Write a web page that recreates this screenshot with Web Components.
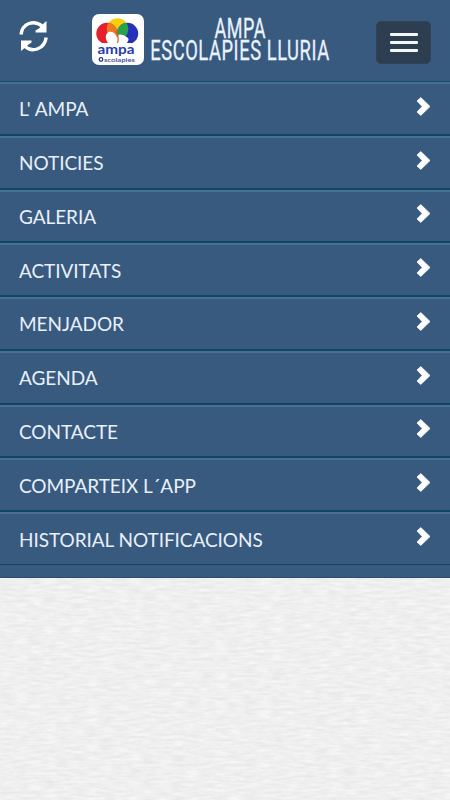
<!DOCTYPE html>
<html lang="ca">
<head>
<meta charset="utf-8">
<meta name="viewport" content="width=device-width, initial-scale=1">
<title>AMPA Escolapies Lluria</title>
<style>
    html, body {
        margin: 0;
        height: 100%;
        overflow: hidden;
    }
    body {
        font-family: Lato, "Open Sans", sans-serif;
        background: #efefef;
    }
</style>
</head>
<body>
<ampa-app>
    <ampa-header slot="header"></ampa-header>
    <ampa-menu slot="menu">
        <ampa-menu-item>L' AMPA</ampa-menu-item>
        <ampa-menu-item>NOTICIES</ampa-menu-item>
        <ampa-menu-item>GALERIA</ampa-menu-item>
        <ampa-menu-item>ACTIVITATS</ampa-menu-item>
        <ampa-menu-item>MENJADOR</ampa-menu-item>
        <ampa-menu-item>AGENDA</ampa-menu-item>
        <ampa-menu-item>CONTACTE</ampa-menu-item>
        <ampa-menu-item>COMPARTEIX L´APP</ampa-menu-item>
        <ampa-menu-item>HISTORIAL NOTIFICACIONS</ampa-menu-item>
    </ampa-menu>
    <ampa-paper></ampa-paper>
</ampa-app>

<script>
window.customElements.define('ampa-app', class extends HTMLElement {
    constructor() {
        super()
        let shadow = this.attachShadow({ mode: 'open' });
        shadow.innerHTML = `
        <style>
            :host {
                display: flex;
                flex-direction: column;
                height: 100vh;
            }
            nav {
                box-sizing: border-box;
                height: 578px;
                flex: none;
                background: #385a7f;
                border-bottom: 1px solid #2b4c73;
            }
        </style>
        <nav>
            <slot name="header"></slot>
            <slot name="menu"></slot>
        </nav>
        <slot></slot>
        `
    }
})

window.customElements.define('ampa-header', class extends HTMLElement {
    constructor() {
        super()
        let shadow = this.attachShadow({ mode: 'open' });
        shadow.innerHTML = `
        <style>
            :host {
                display: flex;
                box-sizing: border-box;
                height: 82px;
                padding: 8px 19px 0;
                align-items: flex-start;
                border-bottom: 1px solid #17496a;
            }
            svg {
                display: block;
                overflow: visible;
            }
            .refresh {
                margin: 12px 44px 0 0;
            }
            ampa-logo {
                margin-top: 6px;
            }
            .title {
                margin-left: 3px;
            }
            ampa-toggle {
                margin: 13px 0 0 auto;
            }
        </style>
        <svg class="refresh" width="29" height="33" viewBox="0 0 29 33" fill="none">
            <path d="M2 14.500C3.500 3 15 -0.500 23 6" stroke="#fff" stroke-width="3.400"/>
            <path d="M27.500 1V12.500H16.500V10.500L20 8.500L24 4Z" fill="#fff"/>
            <path d="M27.200 17.500C25.500 29 13.500 33 6 26.500" stroke="#fff" stroke-width="3.400"/>
            <path d="M2 31V20.500H12.500V22.500L9.500 24.500L5 28.500Z" fill="#fff"/>
        </svg>
        <ampa-logo></ampa-logo>
        <svg class="title" width="188" height="64" viewBox="147 8 188 64" fill="#e9f3fd" stroke="#e9f3fd" stroke-width="0.300" font-family="Roboto, sans-serif" font-size="27" letter-spacing="0.800">
            <text><tspan x="214.500" y="37.700" textLength="51.500" lengthAdjust="spacingAndGlyphs">AMPA</tspan><tspan x="150.200" y="60" textLength="179.500" lengthAdjust="spacingAndGlyphs">ESCOLAPIES LLURIA</tspan></text>
        </svg>
        <ampa-toggle></ampa-toggle>
        `
    }
})

window.customElements.define('ampa-logo', class extends HTMLElement {
    constructor() {
        super()
        let shadow = this.attachShadow({ mode: 'open' });
        shadow.innerHTML = `
        <style>
            :host {
                display: block;
                width: 52px;
                height: 51px;
            }
            svg {
                display: block;
            }
        </style>
        <svg width="52" height="51" viewBox="0 0 52 51">
            <defs>
                <clipPath id="petals"><rect width="52" height="29"/></clipPath>
                <clipPath id="top"><circle cx="25.500" cy="15" r="10.800"/></clipPath>
            </defs>
            <rect width="52" height="51" rx="7" fill="#fff"/>
            <g clip-path="url(#petals)">
                <circle cx="25.500" cy="15" r="10.800" fill="#f8cf0c"/>
                <circle cx="15" cy="19.500" r="10.700" fill="#e3202c"/>
                <circle cx="35.500" cy="19.500" r="10.700" fill="#2431b8"/>
                <g clip-path="url(#top)">
                    <circle cx="15" cy="19.500" r="10.700" fill="#ef7822"/>
                    <circle cx="35.500" cy="19.500" r="10.700" fill="#28a34b"/>
                </g>
                <path d="M25.500 29H16C13 25 13 20 16.500 18C21 16.500 24 20 25.500 25Z" fill="#fff"/>
                <path d="M25.500 29C24.500 24 25.500 21 28 20.500C33 21 37 24 36.500 26L35 29Z" fill="#fff"/>
                <path d="M25.500 29C27 24 26 20 23.500 17" fill="none" stroke="#e15a28" stroke-width="1.200"/>
            </g>
            <text x="5.500" y="40" textLength="37" lengthAdjust="spacingAndGlyphs" font-family="Lato, sans-serif" font-weight="700" font-size="14" fill="#293cae">ampa</text>
            <circle cx="9" cy="45.500" r="1.800" fill="none" stroke="#293c8e" stroke-width="1.300"/>
            <text x="12" y="47.500" textLength="31" lengthAdjust="spacingAndGlyphs" font-family="Lato, sans-serif" font-weight="700" font-size="5.500" fill="#4a5799">scolapies</text>
        </svg>
        `
    }
})

window.customElements.define('ampa-toggle', class extends HTMLElement {
    constructor() {
        super()
        let shadow = this.attachShadow({ mode: 'open' });
        shadow.innerHTML = `
        <style>
            :host {
                display: flex;
                box-sizing: border-box;
                width: 55px;
                height: 43px;
                flex-direction: column;
                justify-content: center;
                align-items: center;
                gap: 5px;
                border: 1px solid #304357;
                border-radius: 5px;
                background: #2c3e50;
            }
            span {
                width: 28px;
                height: 3px;
                border-radius: 1px;
                background: #f2f7f8;
            }
        </style>
        <span></span>
        <span></span>
        <span></span>
        `
    }
})

window.customElements.define('ampa-menu', class extends HTMLElement {
    constructor() {
        super()
        let shadow = this.attachShadow({ mode: 'open' });
        shadow.innerHTML = `
        <style>
            :host {
                display: flex;
                flex-direction: column;
            }
        </style>
        <slot></slot>
        `
    }
})

window.customElements.define('ampa-menu-item', class extends HTMLElement {
    constructor() {
        super()
        let shadow = this.attachShadow({ mode: 'open' });
        shadow.innerHTML = `
        <style>
            :host {
                display: flex;
                box-sizing: border-box;
                height: 53.75px;
                padding: 0 19px;
                justify-content: space-between;
                align-items: center;
                border-top: 2px solid #4b6f93;
                border-bottom: 2px solid #0d4666;
                color: #e8f0fa;
                font-size: 19px;
                letter-spacing: -0.06px;
                line-height: 24px;
                white-space: nowrap;
            }
            :host(:last-child) {
                height: 53px;
                border-bottom-width: 1px;
            }
            span {
                padding-top: 1.2px;
            }
            svg {
                display: block;
                margin-bottom: 5px;
            }
        </style>
        <span><slot></slot></span>
        <svg width="15" height="19" viewBox="0 0 15 19">
            <path d="M1 4L4.800 0.600L14 9.500L4.800 18.400L1 15L6.200 9.500Z" fill="#fff" stroke="#fff" stroke-width="0.800" stroke-linejoin="round"/>
        </svg>
        `
    }
})

// Laid paper: fine noise stretched along x
window.customElements.define('ampa-paper', class extends HTMLElement {
    constructor() {
        super()
        let shadow = this.attachShadow({ mode: 'open' });
        shadow.innerHTML = `
        <style>
            :host {
                display: block;
                flex: 1;
                min-height: 0;
                background: #efefef;
            }
            svg {
                display: block;
                width: 100%;
                height: 100%;
            }
        </style>
        <svg>
            <filter id="paper" x="0" y="0" width="100%" height="100%" color-interpolation-filters="sRGB">
                <feTurbulence type="fractalNoise" baseFrequency="0.07 0.36" numOctaves="3" seed="4"/>
                <feColorMatrix values="0.09 0 0 0 0.893  0.09 0 0 0 0.893  0.09 0 0 0 0.893  0 0 0 0 1"/>
            </filter>
            <rect width="100%" height="100%" filter="url(#paper)"/>
        </svg>
        `
    }
})
</script>
</body>
</html>
